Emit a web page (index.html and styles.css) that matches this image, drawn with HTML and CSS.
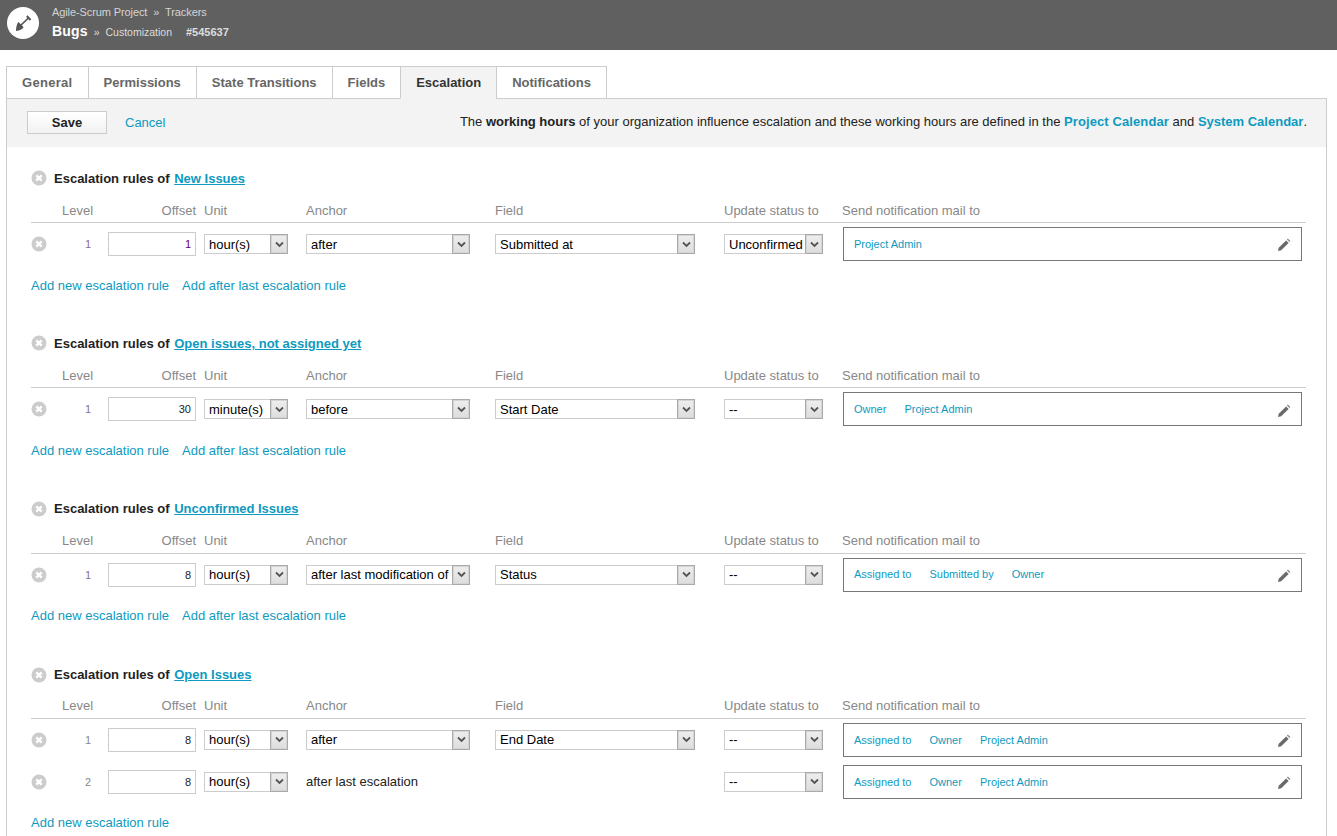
FILE: index.html
```html
<!DOCTYPE html>
<html lang="en">
<head>
    <meta charset="UTF-8">
    <title>Bugs - Customization</title>
    <link rel="stylesheet" href="styles.css">
</head>
<body>
    <svg class="sprites" xmlns="http://www.w3.org/2000/svg">
        <symbol id="icon-remove" viewBox="0 0 16 16">
            <circle cx="8" cy="8" r="7.500" fill="#ccc"/>
            <path d="M5.300 5.300l5.400 5.400m0-5.400l-5.400 5.400" stroke="#fff" stroke-width="2.400" fill="none"/>
        </symbol>
        <symbol id="icon-pencil" viewBox="0 0 14 14">
            <path d="M1 13l.7-3.200 7.400-7.400 2.500 2.500-7.400 7.400z" fill="#6a6a6a"/>
            <path d="M9.900 1.600l1-1 2.500 2.500-1 1z" fill="#8a8a8a"/>
        </symbol>
        <symbol id="icon-arrow" viewBox="0 0 9 7">
            <path d="M1 1.500l3.500 3.500 3.500-3.500" stroke="#555" stroke-width="1.800" fill="none"/>
        </symbol>
    </svg>

    <header class="topbar">
        <div class="topbar-logo">
            <svg width="18" height="18" viewBox="0 0 18 18">
                <path d="M6 12L14.500 4" stroke="#555" stroke-width="1.700" fill="none"/>
                <path d="M12.800 2l3.700 4" stroke="#555" stroke-width="2" fill="none"/>
                <path d="M4.500 8L9.500 13C9 15 6 16.500 2 17C2 13 3 9.500 4.500 8z" fill="#555"/>
            </svg>
        </div>
        <div class="topbar-text">
            <div class="crumbs">Agile-Scrum Project <span class="sep">»</span> Trackers</div>
            <div class="title"><b>Bugs</b> <span class="sep">»</span> <span class="sub">Customization</span> <span class="ticket">#545637</span></div>
        </div>
    </header>

    <main class="content">
        <nav class="tabs">
            <a class="tab tab-general">General</a>
            <a class="tab">Permissions</a>
            <a class="tab">State Transitions</a>
            <a class="tab">Fields</a>
            <a class="tab active">Escalation</a>
            <a class="tab">Notifications</a>
        </nav>

        <div class="panel">
            <div class="toolbar">
                <button class="btn-save">Save</button>
                <a class="link cancel">Cancel</a>
                <p class="hint">The <b>working hours</b> of your organization influence escalation and these working hours are defined in the <a class="link strong project-cal">Project Calendar</a> and <a class="link strong">System Calendar</a>.</p>
            </div>

            <section class="rules">
                <h2 class="rules-title"><svg class="icon-remove"><use href="#icon-remove"/></svg>Escalation rules of <a class="state-link">New Issues</a></h2>
                <div class="grid head">
                    <span></span><span>Level</span><span class="right">Offset</span><span>Unit</span><span>Anchor</span><span>Field</span><span>Update status to</span><span class="head-mail">Send notification mail to</span>
                </div>
                <div class="grid row">
                    <svg class="icon-remove"><use href="#icon-remove"/></svg>
                    <span class="level purple">1</span>
                    <input class="offset purple" value="1">
                    <div class="select unit"><select><option>hour(s)</option></select><i><svg><use href="#icon-arrow"/></svg></i></div>
                    <div class="select anchor"><select><option>after</option></select><i><svg><use href="#icon-arrow"/></svg></i></div>
                    <div class="select field"><select><option>Submitted at</option></select><i><svg><use href="#icon-arrow"/></svg></i></div>
                    <div class="select status"><select><option>Unconfirmed</option></select><i><svg><use href="#icon-arrow"/></svg></i></div>
                    <div class="mailto"><a>Project Admin</a><svg class="icon-pencil"><use href="#icon-pencil"/></svg></div>
                </div>
                <div class="add-links"><a class="link">Add new escalation rule</a><a class="link">Add after last escalation rule</a></div>
            </section>

            <section class="rules">
                <h2 class="rules-title"><svg class="icon-remove"><use href="#icon-remove"/></svg>Escalation rules of <a class="state-link">Open issues, not assigned yet</a></h2>
                <div class="grid head">
                    <span></span><span>Level</span><span class="right">Offset</span><span>Unit</span><span>Anchor</span><span>Field</span><span>Update status to</span><span class="head-mail">Send notification mail to</span>
                </div>
                <div class="grid row">
                    <svg class="icon-remove"><use href="#icon-remove"/></svg>
                    <span class="level purple">1</span>
                    <input class="offset" value="30">
                    <div class="select unit"><select><option>minute(s)</option></select><i><svg><use href="#icon-arrow"/></svg></i></div>
                    <div class="select anchor"><select><option>before</option></select><i><svg><use href="#icon-arrow"/></svg></i></div>
                    <div class="select field"><select><option>Start Date</option></select><i><svg><use href="#icon-arrow"/></svg></i></div>
                    <div class="select status"><select><option>--</option></select><i><svg><use href="#icon-arrow"/></svg></i></div>
                    <div class="mailto"><a>Owner</a><a>Project Admin</a><svg class="icon-pencil"><use href="#icon-pencil"/></svg></div>
                </div>
                <div class="add-links"><a class="link">Add new escalation rule</a><a class="link">Add after last escalation rule</a></div>
            </section>

            <section class="rules">
                <h2 class="rules-title"><svg class="icon-remove"><use href="#icon-remove"/></svg>Escalation rules of <a class="state-link">Unconfirmed Issues</a></h2>
                <div class="grid head">
                    <span></span><span>Level</span><span class="right">Offset</span><span>Unit</span><span>Anchor</span><span>Field</span><span>Update status to</span><span class="head-mail">Send notification mail to</span>
                </div>
                <div class="grid row">
                    <svg class="icon-remove"><use href="#icon-remove"/></svg>
                    <span class="level purple">1</span>
                    <input class="offset" value="8">
                    <div class="select unit"><select><option>hour(s)</option></select><i><svg><use href="#icon-arrow"/></svg></i></div>
                    <div class="select anchor"><select><option>after last modification of</option></select><i><svg><use href="#icon-arrow"/></svg></i></div>
                    <div class="select field"><select><option>Status</option></select><i><svg><use href="#icon-arrow"/></svg></i></div>
                    <div class="select status"><select><option>--</option></select><i><svg><use href="#icon-arrow"/></svg></i></div>
                    <div class="mailto"><a>Assigned to</a><a>Submitted by</a><a>Owner</a><svg class="icon-pencil"><use href="#icon-pencil"/></svg></div>
                </div>
                <div class="add-links"><a class="link">Add new escalation rule</a><a class="link">Add after last escalation rule</a></div>
            </section>

            <section class="rules">
                <h2 class="rules-title"><svg class="icon-remove"><use href="#icon-remove"/></svg>Escalation rules of <a class="state-link">Open Issues</a></h2>
                <div class="grid head">
                    <span></span><span>Level</span><span class="right">Offset</span><span>Unit</span><span>Anchor</span><span>Field</span><span>Update status to</span><span class="head-mail">Send notification mail to</span>
                </div>
                <div class="grid row">
                    <svg class="icon-remove"><use href="#icon-remove"/></svg>
                    <span class="level">1</span>
                    <input class="offset" value="8">
                    <div class="select unit"><select><option>hour(s)</option></select><i><svg><use href="#icon-arrow"/></svg></i></div>
                    <div class="select anchor"><select><option>after</option></select><i><svg><use href="#icon-arrow"/></svg></i></div>
                    <div class="select field"><select><option>End Date</option></select><i><svg><use href="#icon-arrow"/></svg></i></div>
                    <div class="select status"><select><option>--</option></select><i><svg><use href="#icon-arrow"/></svg></i></div>
                    <div class="mailto"><a>Assigned to</a><a>Owner</a><a>Project Admin</a><svg class="icon-pencil"><use href="#icon-pencil"/></svg></div>
                </div>
                <div class="grid row">
                    <svg class="icon-remove"><use href="#icon-remove"/></svg>
                    <span class="level">2</span>
                    <input class="offset" value="8">
                    <div class="select unit"><select><option>hour(s)</option></select><i><svg><use href="#icon-arrow"/></svg></i></div>
                    <span class="anchor-text">after last escalation</span>
                    <span></span>
                    <div class="select status"><select><option>--</option></select><i><svg><use href="#icon-arrow"/></svg></i></div>
                    <div class="mailto"><a>Assigned to</a><a>Owner</a><a>Project Admin</a><svg class="icon-pencil"><use href="#icon-pencil"/></svg></div>
                </div>
                <div class="add-links"><a class="link">Add new escalation rule</a></div>
            </section>
        </div>
    </main>
</body>
</html>
```

FILE: styles.css
```css
* {
    box-sizing: border-box;
}

html, body {
    height: 836px;
    overflow: hidden;
}

body {
    margin: 0;
    background: #fff;
    color: #222;
    font-family: "Liberation Sans", Arial, sans-serif;
    font-size: 13px;
}

.sprites {
    display: none;
}

.topbar {
    display: flex;
    height: 50px;
    padding: 7px;
    background: #606060;
    color: #ddd;
}

.topbar-logo {
    display: flex;
    align-items: center;
    justify-content: center;
    width: 32px;
    height: 32px;
    border-radius: 50%;
    background: #fff;
}

.topbar-text {
    margin-left: 13px;
}

.crumbs {
    margin-top: -1px;
    font-size: 11px;
    letter-spacing: -0.1px;
    line-height: 13px;
    color: #d4d4d4;
}

.crumbs .sep {
    margin: 0 3px;
}

.title {
    margin-top: 4px;
    line-height: 16px;
    font-size: 10.5px;
}

.title b {
    font-size: 14px;
    letter-spacing: 0.2px;
    color: #fff;
}

.title .sep {
    margin: 0 3px;
}

.ticket {
    margin-left: 11px;
    font-size: 11px;
    font-weight: bold;
    color: #ddd;
}

.content {
    padding: 16px 10px 0 6px;
}

.tabs {
    display: flex;
    position: relative;
    z-index: 1;
}

.tab {
    height: 33px;
    margin-left: -1px;
    padding: 0 15px;
    border: 1px solid #ccc;
    background: #fff;
    color: #666;
    font-size: 13px;
    font-weight: bold;
    line-height: 31px;
}

.tab:first-child {
    margin-left: 0;
}

.tab-general {
    letter-spacing: 0.3px;
}

.tab.active {
    border-bottom-color: #f3f3f3;
    background: #f3f3f3;
    color: #333;
}

.panel {
    margin-top: -1px;
    height: 738px;
    border: 1px solid #ccc;
    border-bottom: 0;
}

.toolbar {
    display: flex;
    align-items: center;
    height: 48px;
    padding: 0 19px 2px 20px;
    background: #f3f3f3;
}

.btn-save {
    width: 80px;
    height: 23px;
    padding: 0;
    border: 1px solid #ccc;
    background: linear-gradient(#fff, #f2f2f2);
    color: #222;
    font-family: inherit;
    font-size: 13px;
    font-weight: bold;
}

.link, .state-link, .mailto a {
    color: #0e9ac0;
}

.cancel {
    margin-left: 18px;
}

.hint {
    margin: 0 0 2px auto;
}

.strong {
    font-weight: bold;
}

.project-cal {
    letter-spacing: 0.1px;
}

.rules {
    height: 165.33px;
    padding: 23px 20px 0 24px;
}

.rules:last-child {
    height: auto;
    padding-top: 24px;
}

.rules-title {
    display: flex;
    align-items: center;
    margin: 0;
    height: 16px;
    font-size: 13px;
    font-weight: bold;
    white-space: pre;
}

.rules-title .icon-remove {
    margin-right: 7px;
}

.state-link {
    margin-left: 1px;
    text-decoration: underline;
}

.icon-remove {
    display: block;
    width: 16px;
    height: 16px;
}

.grid {
    display: grid;
    grid-template-columns: 31px 46px 96px 102px 189px 229px 119px 463px;
    align-items: center;
}

.head {
    height: 23px;
    margin-top: 14px;
    padding-bottom: 2px;
    border-bottom: 1px solid #ccc;
    color: #888;
}

.rules:last-child .head {
    margin-top: 13px;
}

.head .right {
    padding-right: 8px;
    text-align: right;
}

.head-mail {
    margin-left: -1px;
}

.row {
    height: 42px;
}

.level {
    padding-right: 17px;
    text-align: right;
    color: #888;
    font-size: 11px;
}

.level.purple {
    color: #8a6d8a;
}

.offset {
    width: 88px;
    height: 24px;
    padding: 0 4px;
    border: 1px solid #ccc;
    color: #222;
    font-family: inherit;
    font-size: 11px;
    text-align: right;
}

.offset.purple {
    color: #606;
}

.select {
    position: relative;
    height: 20px;
}

.select select {
    display: block;
    width: 100%;
    height: 100%;
    padding: 0 18px 0 4px;
    border: 1px solid #ccc;
    border-radius: 0;
    background: #fff;
    color: #000;
    font-family: inherit;
    font-size: 13px;
    appearance: none;
}

.select i {
    display: flex;
    position: absolute;
    top: 0;
    right: 0;
    align-items: center;
    justify-content: center;
    width: 18px;
    height: 20px;
    border: 1px solid #aaa;
    background: linear-gradient(#eee, #ddd);
    box-shadow: inset 0 0 0 1px #d4d4d4;
}

.select i svg {
    display: block;
    width: 9px;
    height: 7px;
}

.unit {
    width: 84px;
}

.anchor {
    width: 164px;
}

.field {
    width: 200px;
}

.status {
    width: 99px;
}

.mailto {
    display: flex;
    align-items: center;
    gap: 18px;
    width: 459px;
    height: 34px;
    padding: 0 10px 0.6px;
    border: 1px solid #777;
    font-size: 11px;
}

.icon-pencil {
    width: 14px;
    height: 14px;
    margin-left: auto;
    margin-top: 3px;
}

.add-links {
    display: flex;
    gap: 13px;
    margin-top: 12.67px;
}

.rules:last-child .add-links {
    margin-top: 12px;
}
```
